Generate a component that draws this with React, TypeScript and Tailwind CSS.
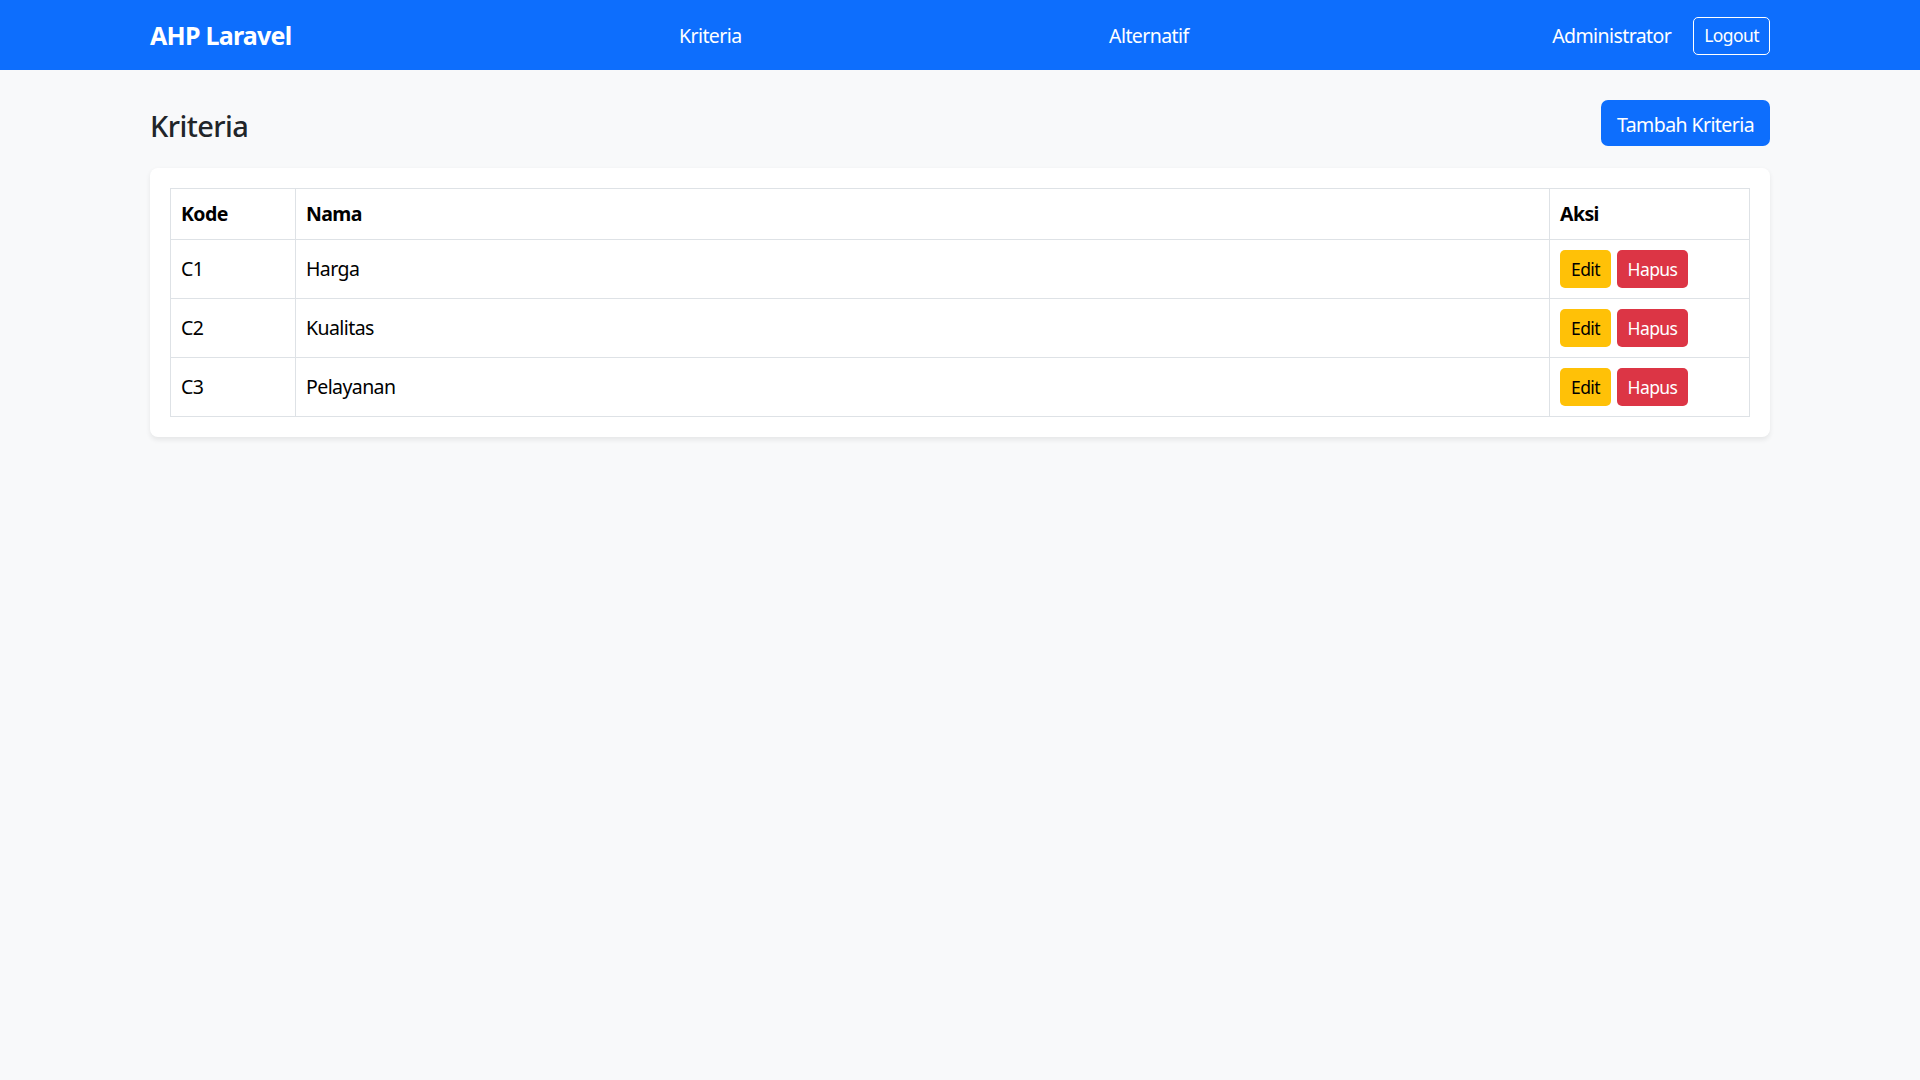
import React from "react";

type Kriteria = { kode: string; nama: string };

const rows: Kriteria[] = [
  { kode: "C1", nama: "Harga" },
  { kode: "C2", nama: "Kualitas" },
  { kode: "C3", nama: "Pelayanan" },
];

function Navbar() {
  return (
    <nav className="bg-[#0d6efd] h-[70px]">
      <div className="mx-auto w-[1620px] h-full flex items-center pt-[1px]">
        <a className="text-white font-bold text-[25px] tracking-[-0.03em] mr-[20px] leading-none">AHP Laravel</a>
        <ul className="flex-1 flex justify-evenly items-center">
          <li><a className="pl-[20px] pr-[10px] text-white">Kriteria</a></li>
          <li><a className="px-[10px] text-white">Alternatif</a></li>
        </ul>
        <div className="flex items-center">
          <span className="text-white pl-[6px] pr-[11px]">Administrator</span>
          <button className="ml-[11px] border border-white rounded-[5px] text-white text-[17.5px] px-[10px] h-[38px] leading-none">
            Logout
          </button>
        </div>
      </div>
    </nav>
  );
}

export default function App() {
  return (
    <div className="min-h-screen bg-[#f8f9fa] text-[#212529] text-[19.5px] tracking-[-0.03em] font-['Noto_Sans',sans-serif]">
      <Navbar />
      <main className="mx-auto w-[1620px] pt-[30px]">
        {/* Judul + tombol tambah */}
        <div className="flex items-center justify-between mb-[22px]">
          <h4 className="text-[29px] font-medium leading-tight pt-[6px]">Kriteria</h4>
          <button className="bg-[#0d6efd] text-white rounded-[7px] h-[46px] px-[16px] pt-[3px]">
            Tambah Kriteria
          </button>
        </div>

        <div className="bg-white rounded-[8px] shadow-[0_2.5px_5px_rgba(0,0,0,0.075)] p-[20px]">
          <table className="w-full border-collapse border border-[#dee2e6] text-black">
            <thead>
              <tr className="h-[51px]">
                <th className="border border-[#dee2e6] px-[10px] text-left font-bold w-[125px]">Kode</th>
                <th className="border border-[#dee2e6] px-[10px] text-left font-bold">Nama</th>
                <th className="border border-[#dee2e6] px-[10px] text-left font-bold w-[200px]">Aksi</th>
              </tr>
            </thead>
            <tbody>
              {rows.map((r) => (
                <tr key={r.kode} className="h-[59px]">
                  <td className="border border-[#dee2e6] px-[10px]">{r.kode}</td>
                  <td className="border border-[#dee2e6] px-[10px]">{r.nama}</td>
                  <td className="border border-[#dee2e6] px-[10px]">
                    <div className="flex gap-[6px]">
                      <button className="bg-[#ffc107] text-black rounded-[5px] h-[38px] w-[51px] text-[17.5px]">Edit</button>
                      <button className="bg-[#dc3545] text-white rounded-[5px] h-[38px] w-[71px] text-[17.5px]">Hapus</button>
                    </div>
                  </td>
                </tr>
              ))}
            </tbody>
          </table>
        </div>
      </main>
    </div>
  );
}
